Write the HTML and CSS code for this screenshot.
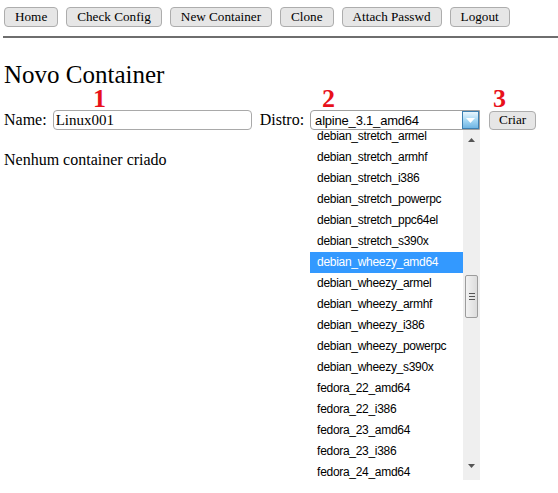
FILE: index.html
```html
<!DOCTYPE html>
<html>
<head>
<meta charset="utf-8">
<link rel="stylesheet" href="styles.css">
</head>
<body>
<nav class="menu">
  <button class="btn">Home</button>
  <button class="btn">Check Config</button>
  <button class="btn">New Container</button>
  <button class="btn">Clone</button>
  <button class="btn">Attach Passwd</button>
  <button class="btn">Logout</button>
</nav>
<hr class="rule">
<h2 class="title">Novo Container</h2>
<div class="form">
  <span class="mark mark-1">1</span>
  <span class="mark mark-2">2</span>
  <span class="mark mark-3">3</span>
  <label class="lbl">Name:</label>
  <input class="name" type="text" value="Linux001">
  <label class="lbl lbl-distro">Distro:</label>
  <div class="select">
    <span class="select-text">alpine_3.1_amd64</span>
    <span class="select-btn"><svg width="9" height="5" viewBox="0 0 9 5"><path d="M0 0h9L4.5 5z" fill="#fff"/></svg></span>
    <div class="popup">
      <ul class="options">
        <li>debian_stretch_armel</li>
        <li>debian_stretch_armhf</li>
        <li>debian_stretch_i386</li>
        <li>debian_stretch_powerpc</li>
        <li>debian_stretch_ppc64el</li>
        <li>debian_stretch_s390x</li>
        <li class="sel">debian_wheezy_amd64</li>
        <li>debian_wheezy_armel</li>
        <li>debian_wheezy_armhf</li>
        <li>debian_wheezy_i386</li>
        <li>debian_wheezy_powerpc</li>
        <li>debian_wheezy_s390x</li>
        <li>fedora_22_amd64</li>
        <li>fedora_22_i386</li>
        <li>fedora_23_amd64</li>
        <li>fedora_23_i386</li>
        <li>fedora_24_amd64</li>
      </ul>
      <div class="scrollbar">
        <svg class="arrow-up" width="7" height="4" viewBox="0 0 7 4"><path d="M0 4h7L3.5 0z" fill="#555"/></svg>
        <div class="thumb"><span></span><span></span><span></span></div>
        <svg class="arrow-down" width="7" height="4" viewBox="0 0 7 4"><path d="M0 0h7L3.5 4z" fill="#555"/></svg>
      </div>
    </div>
  </div>
  <button class="btn btn-criar">Criar</button>
</div>
<p class="empty">Nenhum container criado</p>
</body>
</html>
```
FILE: styles.css
```css
html {
  height: 100%;
  background: #fff;
}
body {
  margin: 0;
  min-height: 100%;
  box-sizing: border-box;
  padding: 7px 0 0 4px;
  font-family: "Liberation Serif", "Times New Roman", serif;
  color: #000;
}
.menu {
  display: flex;
  gap: 8px;
}
.btn {
  height: 20px;
  padding: 0 10px;
  font: 13.2px "Liberation Serif", serif;
  color: #000;
  background: #e6e6e6;
  border: 1px solid #adadad;
  border-radius: 4px;
}
.rule {
  margin: 9px 0 0 -1px;
  border: 0;
  border-top: 2px solid #6e6e6e;
  height: 0;
}
.title {
  margin: 23px 0 0;
  font-size: 25px;
  line-height: 28px;
  font-weight: normal;
}
.form {
  position: relative;
  display: flex;
  align-items: center;
  margin-top: 21px;
  height: 20px;
}
.mark {
  position: absolute;
  top: -21px;
  font: bold 26px "Liberation Serif", serif;
  line-height: 20px;
  color: #e8101a;
}
.mark-1 { left: 89px; }
.mark-2 { left: 318px; }
.mark-3 { left: 489px; }
.lbl {
  font-size: 16px;
}
.name {
  margin-left: 6px;
  width: 199px;
  height: 20px;
  box-sizing: border-box;
  padding: 0 2px;
  border: 1px solid #a9a9a9;
  border-radius: 4px;
  font: 15px "Liberation Serif", serif;
}
.lbl-distro {
  margin-left: 8px;
}
.select {
  position: relative;
  margin-left: 6px;
  width: 170px;
  height: 20px;
  box-sizing: border-box;
  border: 1px solid #a0a0a0;
  border-radius: 4px 0 0 4px;
  display: flex;
  align-items: center;
}
.select-text {
  flex: 1;
  padding-left: 4px;
  font: 13px "Liberation Sans", Arial, sans-serif;
  letter-spacing: -0.2px;
}
.select-btn {
  width: 17px;
  height: 18px;
  box-sizing: border-box;
  border: 1px solid #3c7fb1;
  background: linear-gradient(#eaf6fd, #a7d9f5 50%, #6fb5e3);
  display: flex;
  align-items: center;
  justify-content: center;
}
.popup {
  position: absolute;
  left: -1px;
  top: 19px;
  width: 170px;
  height: 350px;
  background: #fff;
  overflow: hidden;
  display: flex;
}
.options {
  flex: 1;
  list-style: none;
  margin: -4px 0 0;
  padding: 0;
  font: 12px "Liberation Sans", Arial, sans-serif;
  letter-spacing: -0.3px;
  color: #000;
}
.options li {
  height: 21px;
  line-height: 21px;
  padding-left: 7px;
}
.options .sel {
  background: #3399ff;
  color: #fff;
}
.scrollbar {
  width: 17px;
  background: #efefef;
  position: relative;
}
.arrow-up {
  position: absolute;
  left: 5px;
  top: 8px;
}
.arrow-down {
  position: absolute;
  left: 5px;
  bottom: 12px;
}
.thumb {
  position: absolute;
  left: 2px;
  top: 145px;
  width: 13px;
  height: 43px;
  box-sizing: border-box;
  border: 1px solid #9c9c9c;
  border-radius: 2px;
  background: linear-gradient(90deg, #f2f2f2, #dcdcdc);
  display: flex;
  flex-direction: column;
  align-items: center;
  justify-content: center;
  gap: 2px;
}
.thumb span {
  width: 6px;
  height: 1px;
  background: #555;
}
.btn-criar {
  margin-left: 9px;
  padding: 0 9px;
  height: 19px;
}
.empty {
  margin: 20px 0 0;
  font-size: 16px;
  line-height: 20px;
}
```
